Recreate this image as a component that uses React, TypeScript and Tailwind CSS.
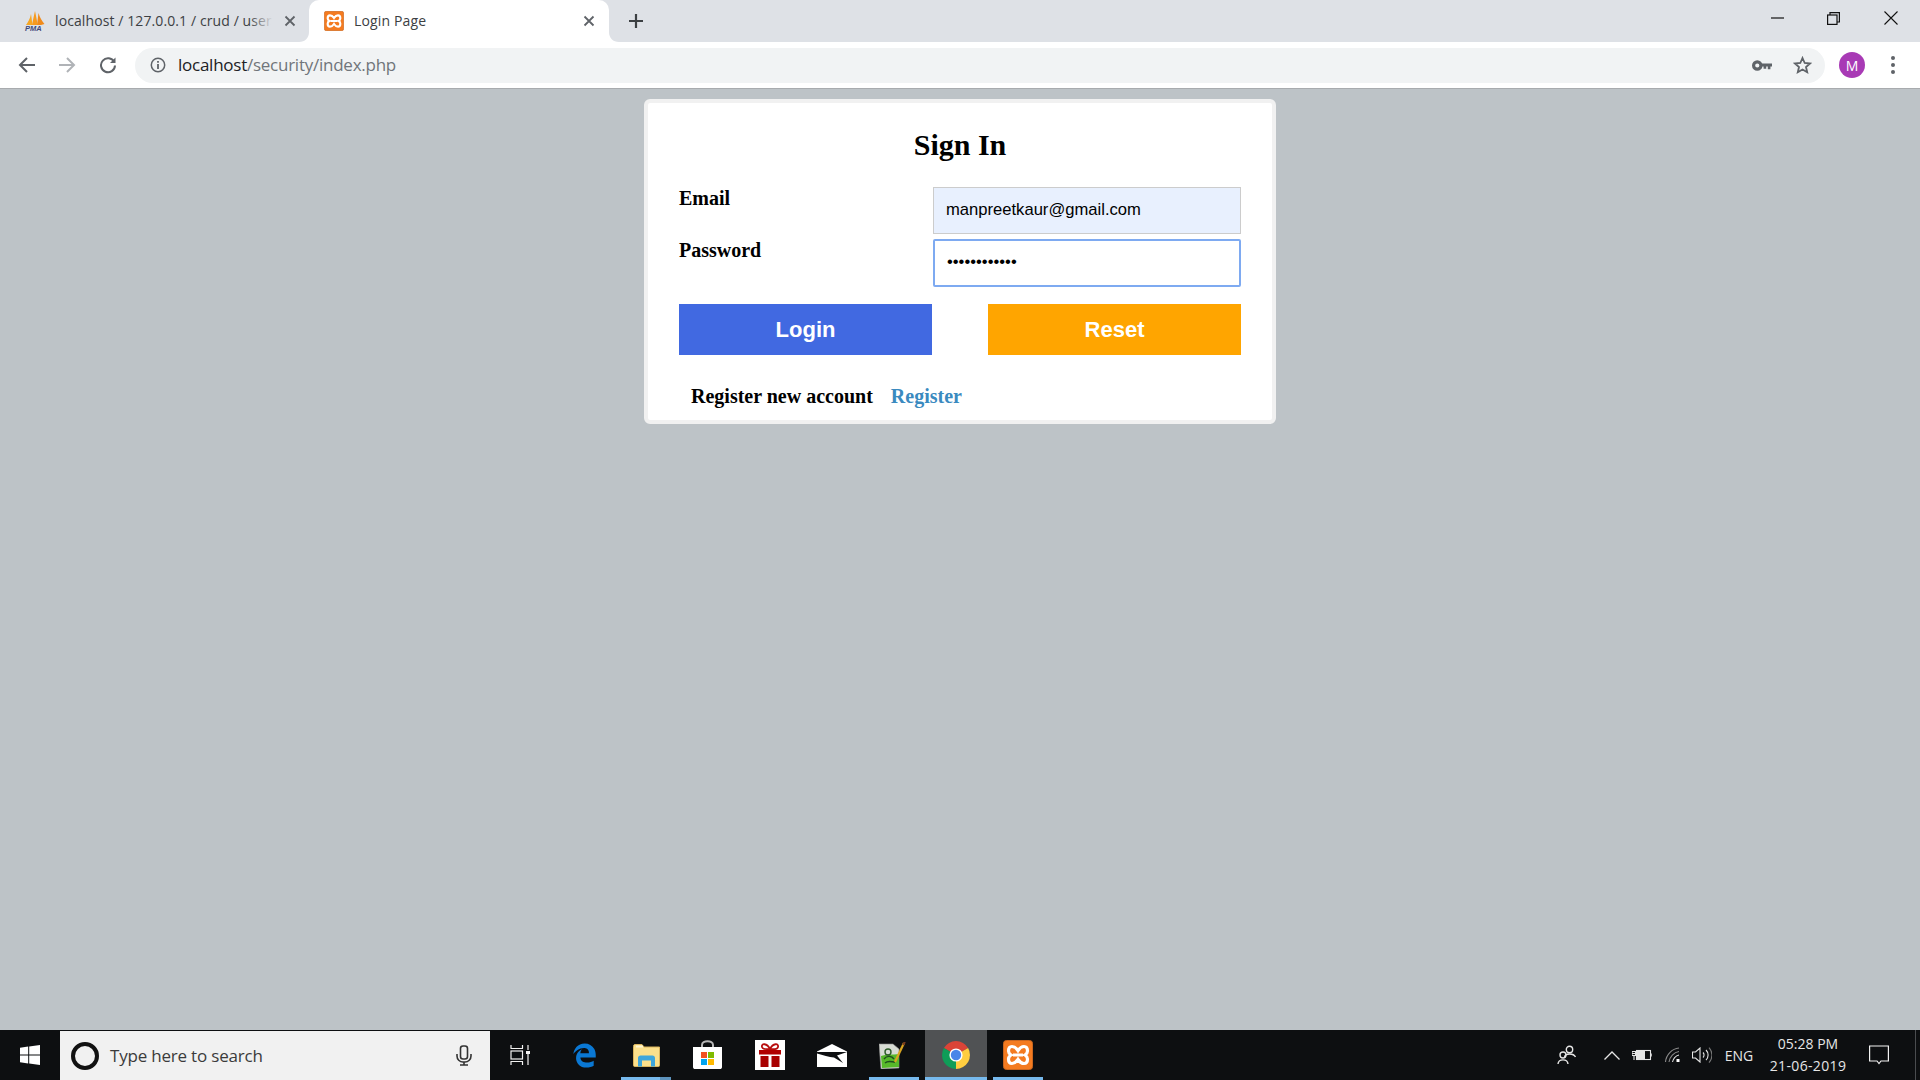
import React from "react";
import { FaEdgeLegacy } from "react-icons/fa";

function Xampp({ size }: { size: number }) {
  return (
    <svg width={size} height={size} viewBox="0 0 30 30">
      <rect x="0.5" y="0.5" width="29" height="29" rx="3" fill="#f47b20" stroke="#c9661f" />
      <path
        d="M15 10.5C13 7.5 11 6.5 9 6.5C6 6.5 5.5 9 5.5 11C5.5 13 6.5 14 8 15C6.5 16 5.5 17 5.5 19C5.5 21 6 23.5 9 23.5C11 23.5 13 22.5 15 19.5C17 22.5 19 23.5 21 23.5C24 23.5 24.5 21 24.5 19C24.5 17 23.5 16 22 15C23.5 14 24.5 13 24.5 11C24.5 9 24 6.5 21 6.5C19 6.5 17 7.5 15 10.5ZM10 15H20"
        fill="none"
        stroke="#fff"
        strokeWidth="3.2"
      />
    </svg>
  );
}

function Pma() {
  return (
    <svg width="22" height="20" viewBox="0 0 22 20">
      <path d="M2 14C4 11 6 8 7 3C7.6 7 8 10 8.5 14Z" fill="#f6a623" />
      <path d="M8 14C9 9 10 4 11 0C12 5 13 9 13.6 14Z" fill="#f79a1e" />
      <path d="M13 14C13.5 10 14 6 14.5 2C16 7 18 10 20.5 13L17 14Z" fill="#f08a1a" />
      <text x="1" y="19.5" fontSize="7.5" fontWeight="700" fontStyle="italic" fill="#3f4a7a" fontFamily="Liberation Sans, sans-serif">PMA</text>
    </svg>
  );
}

function CloseX() {
  return (
    <svg width="12" height="12" viewBox="0 0 12 12">
      <path d="M1.5 1.5L10.5 10.5M10.5 1.5L1.5 10.5" stroke="#5f6368" strokeWidth="1.8" />
    </svg>
  );
}

function Flare({ side }: { side: "left" | "right" }) {
  return (
    <svg
      width="10"
      height="10"
      viewBox="0 0 10 10"
      className={side === "left" ? "absolute bottom-0 -left-[10px]" : "absolute bottom-0 -right-[10px]"}
    >
      {side === "left" ? <path d="M10 0V10H0C6 10 10 6 10 0Z" fill="#fff" /> : <path d="M0 0V10H10C4 10 0 6 0 0Z" fill="#fff" />}
    </svg>
  );
}

function TabStrip() {
  return (
    <div className="h-[42px] bg-[#dee1e6] flex font-[family-name:Open_Sans,sans-serif]">
      <div className="w-[309px] flex items-center pl-[24px]">
        <div className="w-[22px] h-[20px] shrink-0"><Pma /></div>
        <div className="relative ml-[9px] w-[218px] overflow-hidden whitespace-nowrap text-[14px] text-[#3c4043] pb-[2px] tracking-[0.1px]">
          localhost / 127.0.0.1 / crud / user
          <div className="absolute inset-y-0 right-0 w-[24px] bg-gradient-to-r from-transparent to-[#dee1e6]" />
        </div>
        <div className="ml-[11px]"><CloseX /></div>
      </div>
      <div className="relative w-[300px] bg-white rounded-t-[10px] flex items-center pl-[15px]">
        <Flare side="left" />
        <Flare side="right" />
        <Xampp size={20} />
        <span className="ml-[10px] text-[14px] text-[#3c4043] pb-[2px] tracking-[0.15px]">Login Page</span>
        <div className="ml-auto mr-[14px]"><CloseX /></div>
      </div>
      <div className="ml-[18px] flex items-center">
        <svg width="18" height="18" viewBox="0 0 18 18">
          <path d="M9 2V16M2 9H16" stroke="#3c4043" strokeWidth="2.2" />
        </svg>
      </div>
      <div className="ml-auto flex h-[36px] items-center">
        <div className="w-[56px] flex justify-center">
          <svg width="13" height="2" viewBox="0 0 13 2"><path d="M0 1H13" stroke="#111" strokeWidth="1.2" /></svg>
        </div>
        <div className="w-[56px] flex justify-center">
          <svg width="13" height="13" viewBox="0 0 13 13" fill="none" stroke="#111" strokeWidth="1.2">
            <rect x="0.6" y="3" width="9.4" height="9.4" />
            <path d="M3 3V0.6H12.4V10H10" />
          </svg>
        </div>
        <div className="w-[59px] flex justify-center">
          <svg width="14" height="14" viewBox="0 0 14 14"><path d="M0.5 0.5L13.5 13.5M13.5 0.5L0.5 13.5" stroke="#111" strokeWidth="1.1" /></svg>
        </div>
      </div>
    </div>
  );
}

function Toolbar() {
  return (
    <div className="h-[47px] bg-white border-b border-b-[#a8abae] flex items-center font-[family-name:Open_Sans,sans-serif]">
      <div className="w-[53px] flex justify-center">
        <svg width="18" height="18" viewBox="0 0 18 18" fill="none" stroke="#5f6368" strokeWidth="2"><path d="M17 9H2.5M9 2L2 9L9 16" /></svg>
      </div>
      <div className="w-[28px] flex justify-center">
        <svg width="18" height="18" viewBox="0 0 18 18" fill="none" stroke="#b0b3b7" strokeWidth="2"><path d="M1 9H15.5M9 2L16 9L9 16" /></svg>
      </div>
      <div className="w-[47px] pl-[18px] flex">
        <svg width="18" height="18" viewBox="0 0 18 18" fill="none" stroke="#5f6368" strokeWidth="2">
          <path d="M15.2 6A7 7 0 1 0 16 9.5" />
          <path d="M16.5 1.5V7H11" fill="#5f6368" stroke="none" />
        </svg>
      </div>
      <div className="ml-[7px] w-[1690px] h-[35px] bg-[#f1f3f4] rounded-full flex items-center">
        <div className="ml-[15px] w-[16px] flex justify-center">
          <svg width="16" height="16" viewBox="0 0 16 16" fill="none" stroke="#5f6368">
            <circle cx="8" cy="8" r="6.7" strokeWidth="1.5" />
            <path d="M8 7V12" strokeWidth="1.8" />
            <path d="M8 4V5.8" strokeWidth="1.8" />
          </svg>
        </div>
        <div className="ml-[12px] text-[17px] tracking-[-0.25px]">
          <span className="text-[#202124]">localhost</span>
          <span className="text-[#70757a]">/security/index.php</span>
        </div>
        <div className="ml-auto w-[30px] flex justify-center mr-[15px]">
          <svg width="20" height="11" viewBox="0 0 19 10" fill="#5f6368">
            <path d="M5 0A5 5 0 1 1 5 10A5 5 0 0 1 5 0ZM5 3A2 2 0 1 0 5 7A2 2 0 0 0 5 3Z" fillRule="evenodd" />
            <path d="M9 3H19V6H17.5V8.5H15V6H13.5V8H11V6H9Z" />
          </svg>
        </div>
        <div className="w-[20px] flex justify-center mr-[13px]">
          <svg width="19" height="18" viewBox="0 0 19 18" fill="none" stroke="#5f6368" strokeWidth="1.8" strokeLinejoin="miter">
            <path d="M9.5 2L11.7 7L17 7.5L13 11L14.2 16.2L9.5 13.5L4.8 16.2L6 11L2 7.5L7.3 7Z" />
          </svg>
        </div>
      </div>
      <div className="ml-[14px] w-[26px] h-[26px] rounded-full bg-[#a83ab5] flex items-center justify-center text-white text-[14px]">M</div>
      <div className="ml-[26px] flex flex-col gap-[3px]">
        <div className="w-[4px] h-[4px] rounded-full bg-[#5f6368]" />
        <div className="w-[4px] h-[4px] rounded-full bg-[#5f6368]" />
        <div className="w-[4px] h-[4px] rounded-full bg-[#5f6368]" />
      </div>
    </div>
  );
}

function Card() {
  return (
    <div className="mx-auto mt-[10px] w-[632px] bg-white border-4 border-[#f1f1f1] rounded-[6px] px-[31px] pb-[12px] pt-[25px] font-[family-name:Liberation_Serif,serif]">
      <h1 className="text-center text-[30px] leading-[34px] font-bold text-black">Sign In</h1>
      <div className="mt-[25px] grid grid-cols-[254px_308px] grid-rows-[47px_48px] gap-y-[5px]">
        <label className="text-[20px] leading-[22px] font-bold text-black">Email</label>
        <input
          readOnly
          value="manpreetkaur@gmail.com"
          className="h-full w-full bg-[#e8f0fe] border border-[#cccccc] pl-[12px] pb-[2px] text-[16.6px] text-black font-[family-name:Liberation_Sans,sans-serif] outline-none"
        />
        <label className="text-[20px] leading-[22px] font-bold text-black">Password</label>
        <input
          readOnly
          type="password"
          value="manpreetkaur"
          className="h-full w-full bg-white border-2 border-[#7eaaf1] rounded-[2px] pl-[12px] pb-[3px] text-[16.6px] text-black font-[family-name:Liberation_Sans,sans-serif] outline-none"
        />
      </div>
      <div className="mt-[17px] flex justify-between font-[family-name:Liberation_Sans,sans-serif]">
        <button className="w-[253px] h-[51px] bg-[#4169e1] text-white text-[22px] font-bold">Login</button>
        <button className="w-[253px] h-[51px] bg-[#ffa500] text-white text-[22px] font-bold">Reset</button>
      </div>
      <div className="mt-[30px] mb-[1px] ml-[12px] flex gap-[18px] text-[20px] leading-[22px] font-bold">
        <span className="text-black">Register new account</span>
        <a className="text-[#3a8abf]">Register</a>
      </div>
    </div>
  );
}

function Tile({ children, line, active, split }: { children: React.ReactNode; line?: boolean; active?: boolean; split?: boolean }) {
  return (
    <div className={active ? "relative w-[62px] h-full flex items-center justify-center bg-[#505254]" : "relative w-[62px] h-full flex items-center justify-center"}>
      {children}
      {line && (
        <div className={active ? "absolute bottom-0 inset-x-0 h-[3px] bg-[#76b9ed]" : "absolute bottom-0 left-[6px] right-[6px] h-[3px] bg-[#76b9ed]"}>
          {split && <div className="absolute inset-y-0 right-0 w-[11px] bg-[#5d93bd]" />}
        </div>
      )}
    </div>
  );
}

function Taskbar() {
  return (
    <div className="h-[50px] bg-[#0d0f11] flex text-[#e6e6e6] font-[family-name:Open_Sans,sans-serif]">
      <div className="w-[60px] flex items-center justify-center">
        <svg width="20" height="20" viewBox="0 0 20 20" fill="#fff">
          <path d="M0 2.8L8.2 1.6V9.5H0Z" />
          <path d="M9.2 1.4L20 0V9.5H9.2Z" />
          <path d="M0 10.5H8.2V18.4L0 17.2Z" />
          <path d="M9.2 10.5H20V20L9.2 18.6Z" />
        </svg>
      </div>
      <div className="mt-[1px] w-[430px] h-[49px] bg-[#f1f1f1] flex items-center">
        <div className="ml-[11px] w-[28px] h-[28px] rounded-full border-[4px] border-[#111]" />
        <span className="ml-[11px] text-[17px] text-[#3b3b3b] tracking-[-0.2px]">Type here to search</span>
        <div className="ml-auto mr-[18px]">
          <svg width="16" height="21" viewBox="0 0 16 21" fill="none" stroke="#333" strokeWidth="1.6">
            <rect x="4.5" y="1" width="7" height="13" rx="2.5" />
            <path d="M1 9V11A6 6 0 0 0 7 17H9A6 6 0 0 0 15 11V9M4 20H12M8 17V20" />
          </svg>
        </div>
      </div>
      <div className="w-[60px] flex items-center justify-center">
        <svg width="20" height="20" viewBox="0 0 20 20" fill="none" stroke="#f2f2f2" strokeWidth="1.2">
          <path d="M0.5 3.5H13M1 0V3.5M12.5 0V3.5" />
          <rect x="1" y="6" width="11.5" height="8" />
          <path d="M0.5 16.5H13M1 16.5V20M12.5 16.5V20" />
          <path d="M18 0V5M18 9V20" />
          <rect x="16" y="6" width="4" height="3" fill="#f2f2f2" stroke="none" />
        </svg>
      </div>
      <div className="ml-[3px] flex h-full">
        <Tile>
          <FaEdgeLegacy size={25} color="#0a78d4" />
        </Tile>
        <Tile line split>
          <svg width="27" height="23" viewBox="0 0 27 23">
            <path d="M0.5 2.5C0.5 1 1 0.5 2 0.5H9L11 3H26.5V21.5C26.5 22.3 26 22.5 25.5 22.5H1.5C1 22.5 0.5 22 0.5 21.5Z" fill="#fbe08c" stroke="#d9b45c" />
            <rect x="3" y="1.5" width="7" height="2" fill="#fff6d0" />
            <path d="M5 22.5V14C5 12.5 6 11.5 7.5 11.5H19.5C21 11.5 22 12.5 22 14V22.5H18V16.5H9V22.5Z" fill="#3ea6dc" />
          </svg>
        </Tile>
        <Tile>
          <svg width="29" height="30" viewBox="0 0 29 30" className="-translate-x-[1px]">
            <path d="M9 8V5C9 0 20 0 20 5V8" fill="none" stroke="#b8b8b8" strokeWidth="2" />
            <path d="M0 7H29V27C29 28.5 28 29 27 29H2C1 29 0 28.5 0 27Z" fill="#fff" />
            <rect x="8" y="12" width="6" height="6" fill="#f25022" />
            <rect x="15" y="12" width="6" height="6" fill="#7fba00" />
            <rect x="8" y="19" width="6" height="6" fill="#00a4ef" />
            <rect x="15" y="19" width="6" height="6" fill="#ffb900" />
          </svg>
        </Tile>
        <Tile>
          <svg width="30" height="30" viewBox="0 0 30 30">
            <rect width="30" height="30" fill="#fff" />
            <path d="M15 9C12 3 6 3 7 7C7.5 9 11 9.5 15 9C19 9.5 22.5 9 23 7C24 3 18 3 15 9Z" fill="none" stroke="#b80f0f" strokeWidth="1.8" />
            <rect x="4" y="10" width="22" height="4.5" fill="#b00000" />
            <rect x="5.5" y="16" width="8" height="11" fill="#a80000" />
            <rect x="16.5" y="16" width="8" height="11" fill="#a80000" />
          </svg>
        </Tile>
        <Tile>
          <svg width="30" height="23" viewBox="0 0 30 23">
            <path d="M0 7.5L15 0L30 7.5V23H0Z" fill="#fff" />
            <path d="M0 8L30 8L20 11.5L26 19L17 13.5C12 13 6 11 0 9.5Z" fill="#0d0f11" />
          </svg>
        </Tile>
        <Tile line>
          <svg width="27" height="27" viewBox="0 0 27 27" className="-translate-x-[2px]">
            <path d="M0 2H14L20 7V26L2 27Z" fill="#d8dcd4" stroke="#8a8a8a" strokeWidth="0.6" />
            <path d="M2 14C7 12 14 13 20 12V25L3 26Z" fill="#57b82a" />
            <circle cx="9" cy="10" r="3" fill="none" stroke="#2f5d2a" strokeWidth="1.4" />
            <path d="M5 17C8 13 13 14 15 17M6 21C9 18 13 20 16 20" fill="none" stroke="#1f4d1f" strokeWidth="1.4" />
            <path d="M16 20L25 1" stroke="#d9a520" strokeWidth="2.2" />
            <path d="M24 3L26 0" stroke="#7a3b1f" strokeWidth="2" />
          </svg>
        </Tile>
        <Tile line active>
          <svg width="28" height="28" viewBox="0 0 28 28">
            <path d="M14 14L26.1 7A14 14 0 0 0 1.9 7Z" fill="#db4437" />
            <path d="M14 14L1.9 7A14 14 0 0 0 14 28Z" fill="#0f9d58" />
            <path d="M14 14L14 28A14 14 0 0 0 26.1 7Z" fill="#ffcd40" />
            <circle cx="14" cy="14" r="6.6" fill="#fff" />
            <circle cx="14" cy="14" r="5.2" fill="#4a86e8" />
          </svg>
        </Tile>
        <Tile line>
          <Xampp size={30} />
        </Tile>
      </div>
      <div className="ml-auto flex h-full items-center">
        <div className="w-[40px] flex justify-center">
          <svg width="20" height="20" viewBox="0 0 20 20" fill="none" stroke="#e6e6e6" strokeWidth="1.4">
            <circle cx="12.5" cy="4.5" r="3.2" />
            <path d="M7.5 12C8.5 8 16.5 8 18.5 12" />
            <circle cx="6" cy="10" r="3" />
            <path d="M1 19C1.5 13.5 10.5 13.5 11 19" />
          </svg>
        </div>
        <div className="ml-[10px] w-[30px] flex justify-center">
          <svg width="16" height="9" viewBox="0 0 16 9" fill="none" stroke="#e6e6e6" strokeWidth="1.3"><path d="M0.5 8.5L8 1L15.5 8.5" /></svg>
        </div>
        <div className="w-[30px] flex justify-center">
          <svg width="20" height="12" viewBox="0 0 20 12" fill="none" stroke="#e6e6e6" strokeWidth="1.1">
            <rect x="4.5" y="1.5" width="14" height="9" />
            <rect x="5" y="2" width="8" height="8" fill="#e6e6e6" stroke="none" />
            <path d="M19 4.5V7.5" strokeWidth="1.5" />
            <path d="M0 2.5H3.5V6.5H0ZM0 4.5H4.5M2 6.5V11" />
          </svg>
        </div>
        <div className="w-[32px] flex justify-center">
          <svg width="16" height="16" viewBox="0 0 16 16" fill="none" stroke="#8a8a8a" strokeWidth="1.1">
            <path d="M0.5 15C1 8 7 1.5 14 1" />
            <path d="M4 15C4.5 10 9 5 14 4.5" />
            <path d="M7.5 15C8 12 10.5 8.5 14 8" stroke="#dcdcdc" />
            <rect x="11.5" y="12" width="3" height="3" fill="#fff" stroke="none" />
          </svg>
        </div>
        <div className="w-[26px] flex justify-center">
          <svg width="20" height="16" viewBox="0 0 20 16" fill="none" stroke="#e6e6e6" strokeWidth="1.1">
            <path d="M0.5 5H3.5L8 1V15L3.5 11H0.5Z" />
            <path d="M11 5.5A3.5 3.5 0 0 1 11 10.5" />
            <path d="M14 3A7 7 0 0 1 14 13" />
            <path d="M17 0.5A11 11 0 0 1 17 15.5" stroke="#777" />
          </svg>
        </div>
        <div className="w-[48px] text-center text-[14px]">ENG</div>
        <div className="w-[90px] text-center text-[14px] leading-[22px]">
          <div>05:28 PM</div>
          <div className="tracking-[0.35px]">21-06-2019</div>
        </div>
        <div className="w-[52px] flex justify-center">
          <svg width="20" height="20" viewBox="0 0 20 20" fill="none" stroke="#f2f2f2" strokeWidth="1.2">
            <path d="M0.6 1H19.4V16H12L10 18.5L8 16H0.6Z" />
          </svg>
        </div>
        <div className="ml-[10px] mr-[4px] w-[1px] h-full bg-[#4a4c4f]" />
      </div>
    </div>
  );
}

export default function App() {
  return (
    <div className="w-[1920px] h-[1080px] overflow-hidden flex flex-col">
      <TabStrip />
      <Toolbar />
      <main className="flex-1 bg-[#bdc3c7]">
        <Card />
      </main>
      <Taskbar />
    </div>
  );
}
